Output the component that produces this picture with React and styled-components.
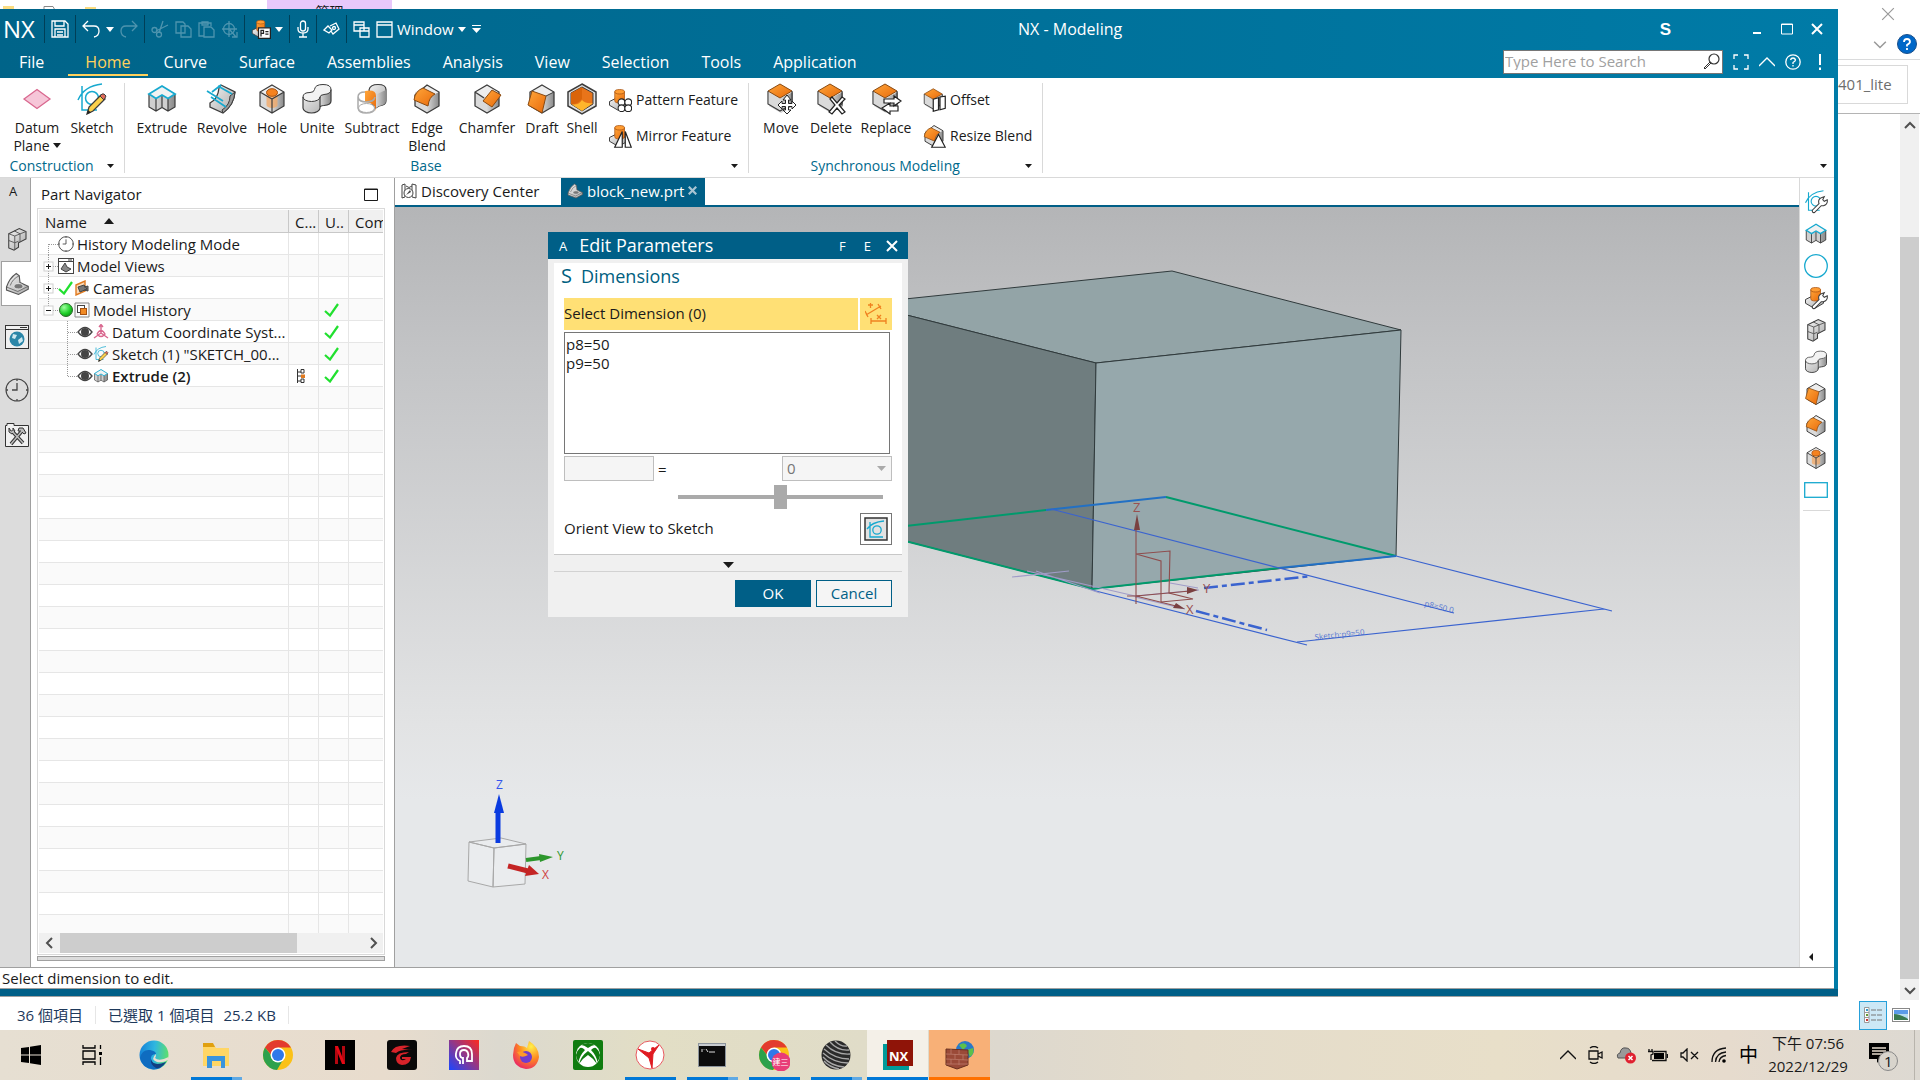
import React from "react";
import styled, { createGlobalStyle, css } from "styled-components";

const Global = createGlobalStyle`
  *, *::before, *::after { box-sizing: border-box; }
  html, body { margin: 0; height: 100%; overflow: hidden; }
  body {
    font-family: "Open Sans", "Noto Sans CJK TC", sans-serif;
    font-size: 15px;
    line-height: 18px;
    color: #1a1a1a;
    background: #fff;
  }
  button { font: inherit; color: inherit; background: none; border: 0; padding: 0; margin: 0; cursor: pointer; }
  input, select { font: inherit; margin: 0; }
  svg { display: block; flex: none; }
`;

/* ---------- desktop ---------- */

const Screen = styled.div`
  display: flex;
  flex-direction: column;
  height: 100vh;
  overflow: hidden;
`;

const Desktop = styled.main`
  position: relative;
  flex: 1;
  min-height: 0;
`;

const Explorer = styled.section`
  display: flex;
  flex-direction: column;
  height: 100%;
  background: #fff;
`;

const ExplorerTop = styled.header`
  display: flex;
  justify-content: space-between;
  height: 60px;
  border-bottom: 1px solid #dadbdc;
`;

const ExplorerQuick = styled.div`
  display: flex;
  gap: 28px;
  padding-left: 3px;
  align-items: flex-start;
`;

const ManageTab = styled.div`
  width: 125px;
  height: 30px;
  margin-left: 142px;
  padding-top: 3px;
  background: #e8c8fb;
  text-align: center;
  font-size: 14px;
`;

const ExplorerControls = styled.div`
  display: grid;
  grid-template-columns: 20px 22px;
  gap: 10px 6px;
  padding: 4px 2px 0 0;
  justify-items: center;
  align-items: center;
  align-content: start;
`;

const ExplorerClose = styled.button`
  grid-column: 1 / 3;
  justify-self: start;
  height: 20px;
  padding-left: 11px;
`;

const ExplorerAddress = styled.div`
  display: flex;
  justify-content: flex-end;
  height: 54px;
  padding: 5px 12px 0 0;
  border-bottom: 1px solid #b4b4b4;
`;

const AddressBox = styled.div`
  width: 72px;
  height: 39px;
  padding: 9px 0 0 1px;
  border: 1px solid #d9d9d9;
  color: #6d6d6d;
`;

const ExplorerBody = styled.div`
  flex: 1;
  display: flex;
  justify-content: flex-end;
  padding-right: 1px;
`;

const VScroll = styled.div`
  display: flex;
  flex-direction: column;
  width: 19px;
  background: #f0f0f0;
`;

const VScrollButton = styled.button`
  display: flex;
  height: 21px;
  align-items: center;
  justify-content: center;
`;

const VThumb = styled.div`
  flex: 1;
  margin-top: 102px;
  background: #cdcdcd;
`;

const ExplorerStatus = styled.footer`
  display: flex;
  align-items: center;
  height: 30px;
  padding-left: 17px;
  color: #1e395b;
`;

const StatusItem = styled.span`
  padding-right: ${(p) => p.$pad || 12}px;
  margin-right: ${(p) => p.$gap || 12}px;
  border-right: ${(p) => (p.$line ? "1px solid #e6e6e6" : "0")};
`;

const ViewButtons = styled.div`
  display: flex;
  gap: 5px;
  margin-left: auto;
  padding-right: 10px;
  align-items: center;
`;

const ViewButton = styled.button`
  display: flex;
  align-items: center;
  justify-content: center;
  width: ${(p) => (p.$on ? 28 : 18)}px;
  height: 29px;
  background: ${(p) => (p.$on ? "#cce8f6" : "none")};
  border: ${(p) => (p.$on ? "1px solid #26a0da" : "0")};
`;

/* ---------- NX window ---------- */

const NxWindow = styled.section`
  position: absolute;
  left: 0;
  top: 9px;
  right: 82px;
  bottom: 33px;
  display: flex;
  flex-direction: column;
  background: linear-gradient(90deg, #006489, #007ba7);
`;

const TitleBar = styled.header`
  display: flex;
  align-items: center;
  height: 40px;
  padding: 0 15px 0 3px;
  color: #fff;
`;

const QuickBar = styled.div`
  display: flex;
  align-items: center;
  gap: 6px;
`;

const Brand = styled.span`
  margin-right: 3px;
  font-size: 24px;
  line-height: 32px;
  color: #fff;
`;

const QuickSep = styled.span`
  width: 1px;
  height: 28px;
  background: #003f57;
`;

const QuickButton = styled.button`
  display: flex;
  align-items: center;
  gap: 4px;
  height: 26px;
  color: #fff;
  opacity: ${(p) => (p.disabled ? 0.3 : 1)};
`;

const AppTitle = styled.h1`
  flex: 1;
  margin: 0;
  font-size: 16px;
  font-weight: 400;
  text-align: center;
`;

const WindowControls = styled.div`
  display: flex;
  align-items: center;
  gap: 18px;
`;

const Badge = styled.span`
  margin-right: 62px;
  padding-top: 2px;
  font: 700 17px/20px "Liberation Sans", sans-serif;
`;

const MenuBar = styled.div`
  display: flex;
  align-items: stretch;
  height: 29px;
  padding-right: 9px;
  color: #fff;
`;

const MenuTabs = styled.nav`
  display: flex;
  align-items: stretch;
  padding-bottom: 2px;
`;

const MenuTab = styled.button`
  padding: 0 ${(p) => (p.$on ? 17 : 16)}px;
  ${(p) => p.$file && "padding: 0 24px 0 19px;"}
  font-size: 16px;
  line-height: 22px;
  color: ${(p) => (p.$on ? "#ffd15c" : "#fff")};
  border-bottom: 2px solid ${(p) => (p.$on ? "#ffd15c" : "transparent")};
`;

const MenuTools = styled.div`
  display: flex;
  align-items: center;
  gap: 10px;
  margin-left: auto;
  padding-bottom: 3px;
`;

const SearchBox = styled.label`
  display: flex;
  align-items: center;
  width: 220px;
  height: 24px;
  padding: 0 2px 2px 0;
  background: #fff;
  border: 1px solid #767676;
`;

const SearchInput = styled.input`
  flex: 1;
  min-width: 0;
  padding: 0 1px;
  border: 0;
  outline: 0;
  background: none;
  &::placeholder { color: #a0a0a0; opacity: 1; }
`;

const IconButton = styled.button`
  display: flex;
  align-items: center;
  justify-content: center;
  color: ${(p) => p.$color || "#fff"};
`;

const Client = styled.div`
  flex: 1;
  min-height: 0;
  display: flex;
  flex-direction: column;
  margin-right: 4px;
  background: #fff;
`;

/* ---------- ribbon ---------- */

const Ribbon = styled.div`
  display: flex;
  height: 100px;
  padding-top: 5px;
  border-bottom: 1px solid #d9d9d9;
  font-size: 14px;
`;

const Group = styled.section`
  display: flex;
  flex-direction: column;
  height: 90px;
  border-right: 1px solid #d9d9d9;
`;

const GroupBody = styled.div`
  display: flex;
  flex: 1;
  padding: 0 7px;
`;

const GroupFoot = styled.div`
  display: flex;
  align-items: center;
  height: 14px;
  color: #00698c;
`;

const FootLabel = styled.span`
  flex: 1;
  text-align: center;
`;

const FootArrow = styled.button`
  display: flex;
  width: 21px;
  padding-left: 4px;
`;

const BigButton = styled.button`
  display: flex;
  flex-direction: column;
  align-items: center;
  gap: 4px;
  width: ${(p) => p.$w}px;
  text-align: center;
  line-height: 18px;
`;

const SmallStack = styled.div`
  display: flex;
  flex-direction: column;
  gap: 12px;
  padding: 5px 3px 0 6px;
`;

const SmallButton = styled.button`
  display: flex;
  align-items: center;
  gap: 4px;
  height: 24px;
  white-space: nowrap;
`;

const RibbonEnd = styled.div`
  display: flex;
  flex: 1;
  align-items: flex-end;
  justify-content: flex-end;
  padding: 0 7px 9px 0;
`;

const InlineArrow = styled.i`
  display: inline-block;
  margin: 0 0 3px 3px;
  border: 4px solid transparent;
  border-bottom: 0;
  border-top: 5px solid #1a1a1a;
`;

/* ---------- work area ---------- */

const Work = styled.div`
  flex: 1;
  min-height: 0;
  display: flex;
`;

const ResourceBar = styled.nav`
  display: flex;
  flex-direction: column;
  width: 31px;
  background: #dcdcdc;
  border-right: 1px solid #a0a0a0;
`;

const ResourceLetter = styled.span`
  height: 38px;
  padding: 4px 0 0 9px;
  font-size: 13px;
`;

const ResourceButton = styled.button`
  display: flex;
  align-items: center;
  justify-content: center;
  height: 45px;
  padding-left: 3px;
  margin-top: ${(p) => p.$gap || 0}px;
  ${(p) =>
    p.$on &&
    css`
      margin-left: 1px;
      margin-right: -1px;
      padding-left: 0;
      background: #fff;
      border: 1px solid #a0a0a0;
      border-right: 0;
    `}
`;

const Navigator = styled.aside`
  display: flex;
  flex-direction: column;
  width: 364px;
  padding: 0 9px 6px 6px;
  border-right: 1px solid #a0a0a0;
`;

const NavTitle = styled.div`
  display: flex;
  align-items: center;
  justify-content: space-between;
  height: 30px;
  padding: 2px 7px 0 4px;
`;

const NavFrame = styled.div`
  flex: 1;
  min-height: 0;
  display: flex;
  flex-direction: column;
  padding: 1px;
  border: 1px solid #d9d9d9;
`;

const TreeClip = styled.div`
  flex: 1;
  min-height: 0;
  overflow: hidden;
`;

const Tree = styled.table`
  width: 100%;
  table-layout: fixed;
  border-collapse: separate;
  border-spacing: 0;
`;

const Th = styled.th`
  height: 23px;
  padding: 2px 0 0 6px;
  overflow: hidden;
  font-weight: 400;
  text-align: left;
  white-space: nowrap;
  background: #f0f0f0;
  border-right: 1px solid #c8c8c8;
  border-bottom: 1px solid #c8c8c8;
  &:last-child { border-right: 0; }
`;

const SortArrow = styled.span`
  display: inline-block;
  margin: 0 0 4px 17px;
  border: 5px solid transparent;
  border-top: 0;
  border-bottom: 6px solid #1a1a1a;
`;

const Tr = styled.tr`
  background: ${(p) => (p.$alt ? "#fafafa" : "#fff")};
  font-weight: ${(p) => (p.$bold ? 600 : 400)};
`;

const Td = styled.td`
  height: 22px;
  padding: 0;
  border-right: 1px solid #e6e6e6;
  border-bottom: 1px solid #e6e6e6;
  &:last-child { border-right: 0; }
`;

const TreeItem = styled.span`
  display: flex;
  align-items: center;
  height: 21px;
  white-space: nowrap;
`;

const TreeText = styled.span`
  margin-left: 3px;
`;

const CellMid = styled.span`
  display: flex;
  padding-left: 5px;
`;

const HScroll = styled.div`
  display: flex;
  align-items: stretch;
  height: 20px;
  background: #f0f0f0;
`;

const HThumb = styled.div`
  flex: 0 1 69%;
  background: #cdcdcd;
`;

const HScrollButton = styled.button`
  display: flex;
  width: 21px;
  align-items: center;
  justify-content: center;
  margin-left: ${(p) => (p.$end ? "auto" : 0)};
`;

const Splitter = styled.div`
  height: 5px;
  margin-top: 1px;
  background: #dcdcdc;
  border: 1px solid #a0a0a0;
`;

const Graphics = styled.section`
  flex: 1;
  min-width: 0;
  display: flex;
  flex-direction: column;
`;

const DocTabs = styled.div`
  display: flex;
  height: 29px;
  border-bottom: 2px solid #005f87;
`;

const DocTab = styled.button`
  display: flex;
  align-items: center;
  gap: 4px;
  width: ${(p) => (p.$on ? 144 : 166)}px;
  padding: 0 6px 2px;
  color: ${(p) => (p.$on ? "#fff" : "#1a1a1a")};
  background: ${(p) => (p.$on ? "#005f87" : "#fff")};
`;

const Viewport = styled.div`
  position: relative;
  flex: 1;
  min-height: 0;
  overflow: hidden;
  background: linear-gradient(#b4b5b7, #c3c4c6 20%, #e2e3e4 68%, #e6e8ea 78%);
`;

const SideBar = styled.nav`
  display: flex;
  flex-direction: column;
  align-items: center;
  gap: 8px;
  width: 35px;
  padding: 12px 2px 6px 0;
  border-left: 1px solid #d9d9d9;
`;

const SideLine = styled.hr`
  width: 27px;
  margin: 0;
  border: 0;
  border-top: 1px solid #d9d9d9;
`;

const SideEnd = styled.button`
  margin-top: auto;
  margin-right: 11px;
`;

const PromptLine = styled.div`
  height: 22px;
  padding: 1px 2px;
  border-top: 1px solid #a0a0a0;
  border-bottom: 1px solid #a0a0a0;
`;

const NxFoot = styled.div`
  height: 8px;
  background: #005f87;
  border-bottom: 1px solid #a0a0a0;
`;

/* ---------- dialog ---------- */

const Dialog = styled.section`
  position: absolute;
  left: 153px;
  top: 25px;
  width: 360px;
  background: #f0f0f0;
`;

const DialogTitle = styled.header`
  display: flex;
  align-items: center;
  height: 27px;
  padding: 0 10px 0 11px;
  background: #005f87;
  color: #fff;
`;

const DialogHeading = styled.h2`
  flex: 1;
  margin: 0;
  padding: 0 0 2px 12px;
  font-size: 18px;
  line-height: 24px;
  font-weight: 400;
`;

const Letter = styled.span`
  font-size: ${(p) => p.$size || 13}px;
  margin-right: ${(p) => p.$mr || 0}px;
`;

const DialogBody = styled.div`
  margin: 4px 6px 0;
  padding: 0 10px 9px;
  background: #fff;
  border-bottom: 1px solid #c8c8c8;
`;

const SectionTitle = styled.h3`
  display: flex;
  align-items: center;
  gap: 9px;
  height: 35px;
  margin: 0 -3px;
  padding-bottom: 9px;
  font-size: 18px;
  font-weight: 400;
  color: #00607f;
`;

const SelectRow = styled.div`
  display: flex;
  gap: 2px;
  height: 32px;
`;

const SelectLabel = styled.label`
  flex: 1;
  line-height: 30px;
  background: #ffe075;
`;

const SelectTool = styled.button`
  display: flex;
  align-items: center;
  justify-content: center;
  width: 32px;
  background: #ffe075;
`;

const ListBox = styled.select`
  display: block;
  width: 326px;
  height: 122px;
  margin-top: 2px;
  padding: 1px 0;
  color: #1a1a1a;
  background: #fff;
  border: 1px solid #767676;
  border-radius: 0;
  outline: 0;
  overflow: hidden;
  option { height: 19px; min-height: 19px; padding: 0 1px; line-height: 18px; }
`;

const ValueRow = styled.div`
  display: flex;
  align-items: center;
  gap: 4px;
  margin-top: 2px;
`;

const NameInput = styled.input`
  width: 90px;
  height: 25px;
  background: #f5f5f5;
  border: 1px solid #bebebe;
`;

const ComboWrap = styled.div`
  display: grid;
  align-items: center;
  width: 110px;
  margin-left: auto;
  background: #f5f5f5;
  border: 1px solid #bebebe;
  svg { grid-area: 1 / 1; justify-self: end; margin-right: 5px; pointer-events: none; }
`;

const Combo = styled.select`
  grid-area: 1 / 1;
  width: 100%;
  height: 23px;
  padding: 0 4px 2px;
  appearance: none;
  color: #767676;
  opacity: 1;
  background: none;
  border: 0;
`;

const Slider = styled.input`
  display: block;
  width: 205px;
  height: 24px;
  margin: 4px 9px 4px auto;
  appearance: none;
  background: linear-gradient(#aaa, #aaa) center / 100% 4px no-repeat;
  &::-webkit-slider-thumb {
    appearance: none;
    width: 13px;
    height: 24px;
    background: #aaa;
  }
`;

const OrientRow = styled.div`
  display: flex;
  align-items: center;
  justify-content: space-between;
`;

const OrientLabel = styled.label`
  padding-bottom: 2px;
`;

const OrientButton = styled.button`
  display: flex;
  align-items: center;
  justify-content: center;
  width: 32px;
  height: 32px;
  background: #fff;
  border: 1px solid #767676;
`;

const MoreButton = styled.button`
  display: flex;
  align-items: center;
  justify-content: center;
  width: 348px;
  height: 17px;
  margin: 0 6px;
  padding-top: 4px;
  border-bottom: 1px solid #d2d2d2;
`;

const DialogFoot = styled.footer`
  display: flex;
  justify-content: flex-end;
  gap: 5px;
  padding: 8px 16px 10px;
`;

const DialogButton = styled.button`
  width: 76px;
  height: 27px;
  padding-bottom: 2px;
  color: ${(p) => (p.$primary ? "#fff" : "#005f87")};
  background: ${(p) => (p.$primary ? "#005f87" : "#f5f5f5")};
  border: 1px solid #005f87;
`;

/* ---------- taskbar ---------- */

const Taskbar = styled.footer`
  display: flex;
  height: 50px;
  background: linear-gradient(90deg, #e6dfd2, #e8dccd 20%, #dcd9cf 26%, #e2dec5 34%, #e0dcc8 45%, #ddd8ce 52%, #e4dccb 62%, #e8dfc9 78%, #e6dbcd 90%, #ddd9d2);
`;

const Task = styled.button`
  position: relative;
  display: flex;
  align-items: center;
  justify-content: center;
  width: ${(p) => p.$w || 62}px;
  background: ${(p) => p.$bg || "none"};
  background-clip: padding-box;
  border-right: ${(p) => (p.$bg ? "1px solid transparent" : "0")};
`;

const Running = styled.span`
  position: absolute;
  left: ${(p) => (p.$full ? 0 : 6)}px;
  right: ${(p) => (p.$full ? 0 : 5)}px;
  bottom: 0;
  height: 3px;
  background: ${(p) =>
    p.$multi ? "linear-gradient(90deg, #0078d7 80%, #5fa9e4 80%)" : p.$color || "#0078d7"};
`;

const Tray = styled.div`
  display: flex;
  align-items: center;
  gap: 12px;
  margin-left: auto;
`;

const Clock = styled.div`
  width: 86px;
  margin-left: -5px;
  text-align: center;
  line-height: 23px;
  white-space: nowrap;
`;

const Ime = styled.span`
  font-size: 19px;
  line-height: 24px;
  color: #000;
`;

const Notify = styled.button`
  margin: 0 4px 0 3px;
`;

const ShowDesktop = styled.button`
  width: 6px;
  height: 50px;
  border-left: 1px solid #b8b4ac;
`;

/* ---------- icons ---------- */

const Svg = ({ s = 24, w, h, vb, children, ...r }) => (
  <svg width={w || s} height={h || s} viewBox={vb || `0 0 ${w || s} ${h || s}`} fill="none" aria-hidden="true" {...r}>
    {children}
  </svg>
);

const DefsSvg = styled.svg`
  position: absolute;
`;

const Defs = () => (
  <DefsSvg width="0" height="0" aria-hidden="true">
    <defs>
      <linearGradient id="gr" x1="0" y1="0" x2="1" y2="1">
        <stop offset="0" stopColor="#f4f4f4" />
        <stop offset="1" stopColor="#a8a8a8" />
      </linearGradient>
      <linearGradient id="gd" x1="0" y1="0" x2="1" y2="0">
        <stop offset="0" stopColor="#d8d8d8" />
        <stop offset="1" stopColor="#8a8a8a" />
      </linearGradient>
      <linearGradient id="og" x1="0" y1="0" x2="1" y2="1">
        <stop offset="0" stopColor="#ffa63a" />
        <stop offset="1" stopColor="#e8690a" />
      </linearGradient>
      <linearGradient id="edge" x1="0" y1=".4" x2="1" y2=".5">
        <stop offset="0" stopColor="#1583d8" />
        <stop offset=".5" stopColor="#2fb6e0" />
        <stop offset="1" stopColor="#5ee06a" />
      </linearGradient>
      <linearGradient id="head" x1="0" y1="1" x2="1" y2="0">
        <stop offset="0" stopColor="#1a45ff" />
        <stop offset="1" stopColor="#ff2a1c" />
      </linearGradient>
      <radialGradient id="ff" cx=".7" cy=".2" r=".9">
        <stop offset="0" stopColor="#fff04a" />
        <stop offset=".5" stopColor="#ff8a1f" />
        <stop offset="1" stopColor="#e81e6a" />
      </radialGradient>
      <radialGradient id="green" cx=".35" cy=".3" r=".8">
        <stop offset="0" stopColor="#9dff9d" />
        <stop offset=".6" stopColor="#1fd02a" />
        <stop offset="1" stopColor="#0a8a12" />
      </radialGradient>
    </defs>
  </DefsSvg>
);

const K = "#3c3c3c";

const Caret = ({ c = "#1a1a1a", w = 8, h = 5 }) => (
  <Svg w={w} h={h}>
    <path d={`M0 0H${w}L${w / 2} ${h}Z`} fill={c} />
  </Svg>
);

const Box = () => (
  <>
    <path d="M16 2 28 9V23L16 30 4 23V9Z" fill="#ededed" />
    <path d="M16 15 28 9V23L16 30Z" fill="url(#gd)" />
    <path d="M16 15 4 9V23L16 30Z" fill="#dadada" />
  </>
);

const shapes = {
  datum: <path d="M3 16 16 6.500 29 16 16 25.500Z" fill="#f6c6d8" stroke="#d9688f" strokeWidth="1.300" />,
  sketchBase: (
    <>
      <path d="M6 3V27H21M2 17Q8 3 26 1" stroke="#17a9cf" strokeWidth="1.500" />
      <circle cx="16" cy="15" r="6.500" stroke="#17a9cf" strokeWidth="1.500" />
    </>
  ),
  pencil: (
    <g>
      <path d="M11 31 13 24 25 12 29 16 17 28Z" fill="#fbd04a" stroke={K} strokeWidth="1.300" />
      <path d="M24 13 26 11Q28 10 30 13L28 17Z" fill="#e06a5a" stroke={K} />
      <path d="M11 31 12 27 15 29.500Z" fill="#222" />
    </g>
  ),
  wrench: (
    <path d="M11 27 20 18Q18 12 24 10L27 9 25 13 27 15 31 13Q32 19 26 21L23 21 14 30Q11 31 11 27Z" fill="#fff" stroke={K} strokeWidth="1.400" />
  ),
  extrude: (
    <>
      <path d="M3 11 16 3 29 11V24L22 28 16 24 10 28 3 24Z" fill="#e6e6e6" />
      <path d="M16 13 22 16V28L16 24.500ZM3 12 10 16V28L3 24Z" fill="#cfcfcf" />
      <path d="M22 16 29 11V24L22 28ZM10 16 16 13V24L10 28Z" fill="url(#gd)" />
      <path d="M3 11V24L10 28 16 24.500 22 28 29 24V11M10 16V28M22 16V28M16 13V24.500" stroke={K} strokeWidth="1.200" />
      <path d="M3 11 16 3 29 11 22 15.500 16 12 10 15.500Z" fill="#f2f2f2" stroke="#17a9cf" strokeWidth="1.800" />
    </>
  ),
  revolve: (
    <>
      <path d="M15 2 29 9Q28 22 17 30L4 24V20Q12 16 13 5Z" fill="url(#gr)" stroke={K} strokeWidth="1.300" />
      <path d="M24 13 29 9Q28 22 17 30L16 27Q24 22 24 13Z" fill="#9a9a9a" stroke={K} />
      <path d="M12 3 26 11M1 8 17 18M5 14 20 24M6 9 15 2" stroke="#17a9cf" strokeWidth="1.700" />
    </>
  ),
  hole: (
    <>
      <Box />
      <path d="M10.500 10V22A5.500 3 0 0 0 21.500 22V10Z" fill="#f3a763" opacity=".75" />
      <path d="M16 2 28 9V23L16 30 4 23V9ZM4 9 16 16 28 9M16 16V30" stroke={K} strokeWidth="1.200" />
      <ellipse cx="16" cy="9.500" rx="5.500" ry="3.800" fill="#f5821f" stroke="#a75210" />
    </>
  ),
  unite: (
    <>
      <path d="M2 14V25A8.500 5 0 0 0 19 25V24Q20 22.500 23 22.500 30 22 30 18V6.500Z" fill="url(#gr)" />
      <path d="M19 14V25L19 24Q20 22.500 23 22.500 30 22 30 18V6.500Q30 11 22 11.500 19 12 19 14Z" fill="url(#gd)" />
      <path d="M2 14Q2 9.500 9 9.500 13 9.500 13.500 6.500 14 1.500 22 1.500 30 1.500 30 6.500 30 11 23 11.500 19 12 19 14A8.500 4.500 0 0 1 2 14Z" fill="#f2f2f2" stroke={K} />
      <path d="M2 14V25A8.500 5 0 0 0 19 25V24Q20 22.500 23 22.500 30 22 30 18V6.500M19 14V25" stroke={K} strokeWidth="1.200" />
    </>
  ),
  subtract: (
    <>
      <path d="M13 7Q14 1.500 22 1.500 30 1.500 30 6.500V18Q30 22 23 23L18 26Z" fill="url(#gr)" stroke={K} strokeWidth="1.200" />
      <path d="M20 12Q21 11 30 7V18Q30 22 23 23L20 25Z" fill="url(#gd)" />
      <path d="M9 8Q20 6 20 13V28Q20 20 9 19Z" fill="url(#og)" />
      <path d="M2 14V25Q3 30 10 30 18 30 19 25M2 14Q2 9 9 9M2 14Q3 19 10 19 18 19 19 14" stroke="#aaa" strokeWidth="1.500" />
      <ellipse cx="10.500" cy="25" rx="8" ry="4.500" fill="#fff" stroke="#aaa" />
    </>
  ),
  edgeBlend: (
    <>
      <Box />
      <path d="M16 2 28 9V23L16 30 4 23V12Z" stroke={K} strokeWidth="1.300" />
      <path d="M12 5 24 11Q18 14 17 23L3 17Q4 8 12 5Z" fill="url(#og)" stroke="#8a4a10" />
    </>
  ),
  chamfer: (
    <>
      <Box />
      <path d="M16 2 28 9V23L16 30 4 23V9ZM4 9 13 15" stroke={K} strokeWidth="1.300" />
      <path d="M21 7 30 12 21 24 12 18Z" fill="url(#og)" stroke="#8a4a10" />
    </>
  ),
  draft: (
    <>
      <Box />
      <path d="M16 2 28 9V23L16 30 4 23V9Z" stroke={K} strokeWidth="1.300" />
      <path d="M6 8 20 13 16 30 2 22Z" fill="url(#og)" stroke="#8a4a10" />
      <path d="M20 13 28 9" stroke={K} />
    </>
  ),
  shell: (
    <>
      <path d="M16 1 30 9V23L16 31 2 23V9Z" fill="#e0e0e0" stroke={K} strokeWidth="1.500" />
      <path d="M16 4 27 10V21L16 28 5 21V10Z" fill="#e8741a" stroke={K} />
      <path d="M16 4V16Q11 22 5 21V10Z" fill="#d9640a" />
      <path d="M5 21Q12 23 16 17 20 21 27 20L16 28Z" fill="#ffb52c" />
    </>
  ),
  feature: (
    <>
      <path d="M2 18 12 13 26 19V23L14 30 2 23Z" fill="url(#gr)" stroke={K} strokeWidth="1.300" />
      <path d="M9 5V17A6.500 3 0 0 0 22 17V5Z" fill="url(#og)" stroke="#a75210" />
      <ellipse cx="15.500" cy="5" rx="6.500" ry="3" fill="#ff9d33" stroke="#a75210" />
    </>
  ),
  topBox: (
    <>
      <Box />
      <path d="M15 1 27 8 15 15 3 8Z" fill="url(#og)" stroke="#8a4a10" />
      <path d="M3 8V21L15 28 27 21V8" stroke={K} strokeWidth="1.200" />
    </>
  ),
  blocks: (
    <>
      <path d="M5 9 19 2 28 6V16L18 21V27L12 31 5 28Z" fill="url(#gr)" stroke={K} strokeWidth="1.400" />
      <path d="M5 9 13 12 28 6M13 12V30M5 18 13 21 18 19M12 5 20 9V20" stroke="#555" strokeWidth="1.200" />
    </>
  ),
  part: (
    <>
      <path d="M2 20Q6 8 15 2L19 5 20 14 31 19V23L18 30 2 24Z" fill="url(#gr)" stroke="#555" strokeWidth="1.500" />
      <path d="M2 20 17 26 31 19M7 18Q10 9 19 5" stroke="#555" />
      <ellipse cx="18" cy="19" rx="6" ry="3.500" fill="#777" stroke="#eee" />
    </>
  ),
};

const overlays = {
  move: <path d="M22 12 26 17H23.500V20.500H27V18L31 22 27 26V23.500H23.500V27H26L22 31 18 27H20.500V23.500H17V26L13 22 17 18V20.500H20.500V17H18Z" fill="#fff" stroke="#222" />,
  delete: <path d="M15 16 17 14 22 20 27 14 30 16 24 22 30 29 27 31 22 25 17 31 14 29 20 22Z" fill="#fff" stroke="#222" strokeWidth="1.200" />,
  replace: <path d="M14 16H24V13L31 18 24 23V20H14ZM28 23H20V20L12 25 20 31V28H28Z" fill="#fff" stroke="#222" strokeWidth="1.200" />,
  pattern: (
    <g fill="#fff" stroke="#222" strokeWidth="1.400">
      <circle cx="18" cy="19" r="4.500" />
      <circle cx="27" cy="19" r="4.500" />
      <circle cx="18" cy="27" r="4.500" />
      <circle cx="27" cy="27" r="4.500" />
    </g>
  ),
  mirror: <path d="M19 10 19 31H9ZM23 10V31H31Z" fill="#fff" stroke="#222" strokeWidth="1.600" />,
  offset: <path d="M15 15 22 13V29L15 31ZM24 12 31 11V27L24 29Z" fill="#fff" stroke="#222" strokeWidth="1.600" />,
  resize: <path d="M22 14 31 31H13Z" fill="#fff" stroke="#222" strokeWidth="1.600" />,
};

const Tool = ({ names, s = 32 }) => (
  <Svg s={s} vb="0 0 32 32">
    {names.split(" ").map((n) => (
      <React.Fragment key={n}>{shapes[n] || overlays[n]}</React.Fragment>
    ))}
  </Svg>
);

const Check = () => (
  <Svg w={16} h={14}>
    <path d="M1 8 6 12.500 14 1" stroke="#21e02f" strokeWidth="2.200" />
  </Svg>
);

const Eye = () => (
  <Svg w={16} h={12}>
    <path d="M1 6Q8-3 15 6 8 15 1 6Z" fill="#fff" stroke="#444" strokeWidth="1.300" />
    <circle cx="8" cy="6" r="4" fill="#444" />
  </Svg>
);

const ClockIcon = ({ s = 16 }) => (
  <Svg s={s} vb="0 0 24 24">
    <circle cx="12" cy="12" r="11" stroke="#444" strokeWidth={s > 16 ? 1.1 : 1.4} />
    <path d="M12 5V12H7M12 1V3M12 21V23M1 12H3M21 12H23" stroke="#444" strokeWidth="1.300" />
  </Svg>
);

const CrossIcon = ({ s = 12, c = "#fff", w = 2 }) => (
  <Svg s={s} vb="0 0 12 12">
    <path d="M1 1 11 11M11 1 1 11" stroke={c} strokeWidth={w} />
  </Svg>
);

const Chevron = ({ d, c = "#505050", w = 2, s = 12 }) => {
  const paths = { up: "M1 9 6 4 11 9", down: "M1 4 6 9 11 4", left: "M8 1 3 6 8 11", right: "M4 1 9 6 4 11" };
  return (
    <Svg s={s} vb="0 0 12 12">
      <path d={paths[d]} stroke={c} strokeWidth={w} />
    </Svg>
  );
};

/* Tree connector: dotted guides plus an optional expander box. */
const Branch = ({ kind, first, last }) => (
  <Svg w={19} h={22}>
    <path d={`M9.500 ${first ? 11 : 0}V${last ? 11 : 22}M10 11.500H19`} stroke="#999" strokeDasharray="1 1" />
    {kind && (
      <>
        <rect x="5" y="7" width="9" height="9" fill="#fff" stroke="#d0d0d0" />
        <path d={kind === "plus" ? "M7 11.500H12M9.500 9V14" : "M7 11.500H12"} stroke="#1a1a1a" />
      </>
    )}
  </Svg>
);

const SubBranch = ({ last }) => (
  <Svg w={38} h={22}>
    <path d={`M28.500 0V${last ? 11 : 22}M29 11.500H38`} stroke="#999" strokeDasharray="1 1" />
  </Svg>
);

const treeIcons = {
  views: (
    <Svg s={16}>
      <rect x=".5" y=".5" width="15" height="15" fill="#fff" stroke="#444" />
      <path d="M0 3.500H16M10 2H14" stroke="#444" />
      <path d="M3 11 7 5 9 9 13 11 8 14Z" fill="#888" stroke="#444" />
    </Svg>
  ),
  camera: (
    <Svg s={16}>
      <path d="M2 5 11 1V11L2 15Z" stroke="#e07a20" strokeWidth="1.400" fill="#fbd9b8" />
      <path d="M4 7 10 5 13 9 6 12ZM10 7 14 6V11L10 10" fill="#777" stroke="#444" />
    </Svg>
  ),
  history: (
    <Svg s={16}>
      <path d="M1 1H15V15H1Z" stroke="#888" />
      <rect x="3.500" y="3.500" width="7" height="7" fill="#fff" stroke="#444" />
      <rect x="6.500" y="6.500" width="6" height="6" fill="#f08a24" stroke="#a75210" />
    </Svg>
  ),
  csys: (
    <Svg s={16}>
      <path d="M8 1V9L1 14M8 9 15 14M6 3 8 .5 10 3M4 10Q8 3 12 10Q8 15 4 10" stroke="#d9688f" strokeWidth="1.400" />
    </Svg>
  ),
};

/* ---------- model scene ---------- */

const Scene = () => (
  <svg width="100%" height="100%" viewBox="395 207 1404 760" preserveAspectRatio="xMinYMin slice" role="img" aria-label="Model view">
    <g stroke="#303a3c" strokeWidth="1" strokeLinejoin="round">
      <path d="M800 310 1172 271 1401 330 1096 363 800 288Z" fill="#93a4a7" />
      <path d="M800 288 1096 363 1092 589 800 514Z" fill="#6f7d7f" />
      <path d="M1096 363 1401 330 1396 556 1092 589Z" fill="#96a8ac" />
    </g>
    <g fill="none" stroke="#009a6c" strokeWidth="2">
      <path d="M800 538 1046 510M1166 497 1396 556M800 514 1092 589 1279 568" />
      <path d="M1046 510 1166 497M1279 568 1396 556" stroke="#2270c4" />
    </g>
    <g fill="none" stroke="#3a63cf" strokeWidth="1.200">
      <path d="M1051 509 1454 613M1396 556 1612 611M1092 590 1307 645M1297 642 1604 609" />
      <path d="M1204 588 1311 576" strokeWidth="2.500" strokeDasharray="14 4 5 4" />
      <path d="M1196 611 1267 630" strokeWidth="2.500" strokeDasharray="14 4 5 4" />
    </g>
    <g fill="none" stroke="#a09cc8" strokeWidth="1.200">
      <path d="M1012 577 1069 571M1027 571 1135 596 1199 590M1036 571 1100 593M1170 583 1198 588M1135 597 1185 609" />
    </g>
    <g fill="#3a63cf" fontFamily="Open Sans, sans-serif" fontSize="8" opacity=".8">
      <text x="1315" y="640" transform="rotate(-6 1315 640)">Sketch:p9=50</text>
      <text x="1424" y="606" transform="rotate(14 1424 606)">p8=50.0</text>
    </g>
    <g fill="none" stroke="#8e4c4c" strokeWidth="1.100">
      <path d="M1136 604V528M1127 596H1140M1136 554 1170 551 1169 593 1193 599 1161 602V561Z" />
      <path d="M1136 596 1176 606M1136 596 1190 591" />
    </g>
    <g fill="#7a4040">
      <path d="M1137 514 1140 530H1134ZM1198 590 1187 594V587ZM1185 609 1173 608 1176 603Z" />
    </g>
    <g fill="#9a5050" fontFamily="Open Sans, sans-serif" fontSize="13">
      <text x="1133" y="512">Z</text>
      <text x="1203" y="593">Y</text>
      <text x="1186" y="614">X</text>
    </g>
    <g fill="#eaecee" stroke="#a8a8a8">
      <path d="M469 842 501 838 526 844 494 848ZM469 842 468 881 493 887 494 848ZM494 848 493 887 525 884 526 844Z" />
    </g>
    <path d="M498 843V811" stroke="#0a3be0" strokeWidth="5" />
    <path d="M499 794 504 813H494Z" fill="#0a3be0" />
    <path d="M526 860 541 858" stroke="#2c962c" strokeWidth="4" />
    <path d="M553 857 540 862 539 854Z" fill="#2c962c" />
    <path d="M508 866 528 871" stroke="#c42424" strokeWidth="5" />
    <path d="M539 874 525 876 529 865Z" fill="#c42424" />
    <g fontFamily="Open Sans, sans-serif" fontSize="12">
      <text x="496" y="789" fill="#3355ee">Z</text>
      <text x="557" y="860" fill="#2c962c">Y</text>
      <text x="542" y="879" fill="#d04040">X</text>
    </g>
  </svg>
);

/* ---------- task icons ---------- */

const Chrome = ({ badge }) => (
  <Svg s={32} vb="0 0 32 32">
    <circle cx="16" cy="16" r="15" fill="#fbc116" />
    <path d="M3 8.500A15 15 0 0 1 29 8.500H16L11 18Z" fill="#e33b2e" />
    <path d="M3 8.500A15 15 0 0 0 15 31L22 19 11 18.500Z" fill="#2da14c" />
    <circle cx="16" cy="16" r="7.500" fill="#fff" />
    <circle cx="16" cy="16" r="6" fill="#2f78ea" />
    {badge && (
      <>
        <circle cx="23" cy="23" r="9.500" fill="#e83d78" />
        <text x="14.500" y="26" fontSize="8" fill="#fff">建三</text>
      </>
    )}
  </Svg>
);

const taskIcons = {
  edge: (
    <Svg s={30}>
      <circle cx="15" cy="15" r="14.500" fill="url(#edge)" />
      <path d="M1 18Q3 9 11 10 17 11 17 14 11 14 12 20 15 28 27 22 22 30 14 29.500 3 28 1 18Z" fill="#0f6cc0" />
      <path d="M12 19Q14 27 27 22 22 29 17 28 11 25 12 19Z" fill="#123f80" />
      <path d="M17 14Q17 17 16 18 20 22 29.500 17L29 20Q24 23 18 22 11 19 17 14Z" fill="#e8dfd2" />
    </Svg>
  ),
  files: (
    <Svg s={30}>
      <path d="M2 5H13L15 8H28V26H2Z" fill="#ffd665" />
      <path d="M2 3H12L14 7H2Z" fill="#e0a010" />
      <path d="M6 28V16H24V28H20V21H11V28Z" fill="#3a94dd" />
    </Svg>
  ),
  netflix: (
    <Svg s={30}>
      <rect width="30" height="30" fill="#000" />
      <path d="M10 6H13V24H10ZM17 6H20V24H17Z" fill="#b20710" />
      <path d="M10 6H13L20 24H17Z" fill="#e50914" />
    </Svg>
  ),
  garena: (
    <Svg s={30}>
      <rect width="30" height="30" rx="3" fill="#0a0a0a" />
      <path d="M4 12Q8 4 23 6L15 9 26 10Q14 9 9 13ZM9 18Q10 12 22 12L19 14Q13 14 13 18 14 22 19 19H15V17H24Q23 25 15 25 9 24 9 18Z" fill="#d8232a" />
    </Svg>
  ),
  head: (
    <Svg s={30}>
      <rect width="30" height="30" fill="url(#head)" />
      <path d="M11 24V21Q6 19 7 13 8 6 15 6 23 6 23 14V21H18V18Q20 16 19 13 18 10 15 10 11 10 11 14 11 18 14 18V24" stroke="#fff" strokeWidth="1.800" />
    </Svg>
  ),
  firefox: (
    <Svg s={30}>
      <path d="M3 8 5 3 9 6Q14 6 16 8L18 1Q28 7 28 17 26 29 15 29 2 27 2 15Z" fill="url(#ff)" />
      <circle cx="15" cy="17" r="6" fill="#6f3ccf" />
      <path d="M6 12Q11 10 17 15 12 18 9 16Z" fill="#ff9a2a" />
    </Svg>
  ),
  xbox: (
    <Svg s={30}>
      <rect width="30" height="30" rx="2" fill="#107c10" />
      <circle cx="15" cy="15" r="12" fill="#fff" />
      <path d="M8 5Q11 5 15 8 19 5 22 5 15 1 8 5ZM6 24Q8 16 15 11 22 16 24 24 20 18 15 15 10 18 6 24ZM7 8Q9 7 12 10 7 15 5.500 22 0 14 7 8ZM23 8Q21 7 18 10 23 15 24.500 22 30 14 23 8Z" fill="#107c10" />
    </Svg>
  ),
  ballet: (
    <Svg s={30}>
      <circle cx="15" cy="15" r="14" fill="#fff" stroke="#e85a60" />
      <circle cx="18" cy="9" r="2" fill="#e01b22" />
      <path d="M3 9 14 13 24 5 18 14 17 28 14 18Z" fill="#e01b22" stroke="#e01b22" />
    </Svg>
  ),
  cmd: (
    <Svg w={28} h={24}>
      <rect x=".5" y=".5" width="27" height="23" fill="#0c0c0c" stroke="#8c949c" />
      <path d="M1 2H27" stroke="#c8ccd0" strokeWidth="2" />
      <path d="M4 6V9M6 6V6.500M8 6 10 9M11 9H17" stroke="#ddd" />
    </Svg>
  ),
  chrome: <Chrome />,
  chrome2: <Chrome badge />,
  ball: (
    <Svg s={30}>
      <circle cx="15" cy="15" r="14.500" fill="#2b2b2b" />
      <path d="M3 9Q14 19 28 19M2 13Q13 23 27 23M5 5Q15 15 29 14M9 2Q17 11 28 10M2 17Q10 26 23 27M14 1Q20 7 26 6M3 21Q8 27 18 29" stroke="#a8a8a8" strokeWidth="1.300" />
    </Svg>
  ),
  nx: (
    <Svg s={30}>
      <rect y="4" width="26" height="26" fill="#009a9a" />
      <rect x="4" width="26" height="26" fill="#8f1408" />
      <text x="6" y="21" fontFamily="Open Sans, sans-serif" fontWeight="700" fontSize="13" fill="#fff">NX</text>
    </Svg>
  ),
  firewall: (
    <Svg s={30}>
      <circle cx="20" cy="10" r="9" fill="#2a78c8" />
      <path d="M14 5Q20 1 22 6L18 10ZM22 10 28 8Q30 13 25 17Z" fill="#5cc04a" />
      <path d="M1 9 23 10V25L12 29 1 25Z" fill="#9a4a38" stroke="#6a3020" />
      <path d="M1 14 23 15M1 19 23 20M1 24 23 24M6 9V14M14 10V14M10 14V19M18 15V20M6 19V24M14 20V25" stroke="#c08070" strokeWidth=".7" />
    </Svg>
  ),
};

/* ---------- data ---------- */

const menus = ["File", "Home", "Curve", "Surface", "Assemblies", "Analysis", "View", "Selection", "Tools", "Application"];

const baseTools = [
  ["Extrude", "extrude", 60],
  ["Revolve", "revolve", 60],
  ["Hole", "hole", 40],
  ["Unite", "unite", 50],
  ["Subtract", "subtract", 60],
  ["Edge Blend", "edgeBlend", 50],
  ["Chamfer", "chamfer", 70],
  ["Draft", "draft", 40],
  ["Shell", "shell", 40],
];

const syncTools = [
  ["Move", "topBox move", 50],
  ["Delete", "topBox delete", 50],
  ["Replace", "topBox replace", 60],
];

const rows = [
  { lead: <Branch first />, icons: <ClockIcon s={16} />, text: "History Modeling Mode" },
  { lead: <Branch kind="plus" />, icons: treeIcons.views, text: "Model Views" },
  { lead: <Branch kind="plus" />, icons: <><Check />{treeIcons.camera}</>, text: "Cameras" },
  {
    lead: <Branch kind="minus" last />,
    icons: (
      <>
        <Svg s={16}><circle cx="8" cy="8" r="6.500" fill="url(#green)" stroke="#2a6a2a" /></Svg>
        {treeIcons.history}
      </>
    ),
    text: "Model History",
    ok: true,
  },
  { lead: <SubBranch />, icons: <><Eye />{treeIcons.csys}</>, text: "Datum Coordinate Syst...", ok: true },
  { lead: <SubBranch />, icons: <><Eye /><Tool s={16} names="sketchBase pencil" /></>, text: "Sketch (1) \"SKETCH_00...", ok: true },
  { lead: <SubBranch last />, icons: <><Eye /><Tool s={16} names="extrude" /></>, text: "Extrude (2)", ok: true, bold: true, mark: true },
];

const filler = Array.from({ length: 40 }, () => ({}));

const side = [
  ["Edit Sketch", "sketchBase wrench"],
  ["Extrude", "extrude"],
  ["Circle", null],
  ["Edit Feature", "feature wrench"],
  ["Assemblies", "blocks"],
  ["Unite", "unite"],
  ["Draft", "draft"],
  ["Edge Blend", "edgeBlend"],
  ["Hole", "hole"],
];

const tasks = [
  ["Edge", "edge"],
  ["Files", "files", { multi: true }],
  ["Chrome", "chrome"],
  ["Netflix", "netflix"],
  ["Garena", "garena"],
  ["Assistant", "head"],
  ["Firefox", "firefox"],
  ["Xbox", "xbox"],
  ["Ballet", "ballet", { run: true }],
  ["Terminal", "cmd", { multi: true }],
  ["Chrome profile", "chrome2", { run: true }],
  ["Ball", "ball", { multi: true }],
  ["NX", "nx", { full: true, bg: "#f4f0e8" }],
  ["Firewall", "firewall", { full: true, bg: "#f8b077", color: "#ff7000" }],
];

/* ---------- parts ---------- */

const L = { stroke: "currentColor", strokeWidth: 1.3 };

const Title = () => (
  <TitleBar>
    <QuickBar>
      <Brand>NX</Brand>
      <QuickSep />
      <QuickButton aria-label="Save">
        <Svg s={18}><path d="M1 1H14L17 4V17H1ZM4 1V6H13V1M4 17V9H14V17M6 12H12M6 15H12" {...L} /></Svg>
      </QuickButton>
      <QuickSep />
      <QuickButton aria-label="Undo">
        <Svg w={20} h={18}><path d="M6 1 1 6 6 11M1 6H12Q17 6 17 11 17 16 12 17" {...L} /></Svg>
        <Caret c="#fff" />
      </QuickButton>
      <QuickButton aria-label="Redo" disabled>
        <Svg w={18} h={18}><path d="M12 1 17 6 12 11M17 6H6Q1 6 1 11 1 16 6 17" {...L} /></Svg>
      </QuickButton>
      <QuickSep />
      <QuickButton aria-label="Cut" disabled>
        <Svg s={18}><path d="M17 5 5 11M12 1 8 13" {...L} /><circle cx="3.500" cy="10" r="2.500" {...L} /><circle cx="8" cy="14.500" r="2.500" {...L} /></Svg>
      </QuickButton>
      <QuickButton aria-label="Copy" disabled>
        <Svg s={17}><path d="M1 1H8L10 3V12H1ZM6 5H13L16 8V16H6Z" {...L} /></Svg>
      </QuickButton>
      <QuickButton aria-label="Paste" disabled>
        <Svg s={17}><path d="M6 15H1V2H13V5M4 1H10V4H4ZM6 6H13L16 9V16H6Z" {...L} /></Svg>
      </QuickButton>
      <QuickButton aria-label="Repeat" disabled>
        <Svg s={17}><path d="M8 0V16M1 8H16M9 9 15 16M11 16H16V11" {...L} /><circle cx="8" cy="8" r="5.500" {...L} /></Svg>
      </QuickButton>
      <QuickSep />
      <QuickButton aria-label="Edit parameters">
        <Svg w={20} h={20} vb="0 0 32 32">
          {shapes.feature}
          <path d="M12 14H31V31H12Z" fill="#fff" stroke="#222" strokeWidth="2" />
          <path d="M16 28V18H20V23H16M23 20H28M23 24H28" stroke="#222" strokeWidth="2" />
        </Svg>
        <Caret c="#fff" />
      </QuickButton>
      <QuickSep />
      <QuickButton aria-label="Voice">
        <Svg w={14} h={18}><rect x="4.500" y="1" width="5" height="10" rx="2.500" {...L} /><path d="M2 7V9Q2 13 7 13T12 9V7M7 13V17M3 17H11" {...L} /></Svg>
      </QuickButton>
      <QuickSep />
      <QuickButton aria-label="Touch">
        <Svg w={17} h={14}><path d="M1 8 5 4 9 8 6 11ZM7 4 13 1 16 7 10 12 8 9" {...L} /><circle cx="11" cy="6" r="1.500" {...L} /></Svg>
      </QuickButton>
      <QuickSep />
      <QuickButton aria-label="Switch window">
        <Svg s={17}><path d="M1 1H11V10H1ZM1 4H11M7 7H16V16H7ZM7 10H16" {...L} /></Svg>
      </QuickButton>
      <QuickButton>
        <Svg s={17}><path d="M1 1H16V16H1ZM1 4H16" {...L} /></Svg>
        Window
        <Caret c="#fff" />
      </QuickButton>
      <QuickButton aria-label="Customize">
        <Svg w={9} h={8}><path d="M0 .5H9" stroke="#fff" /><path d="M0 3H9L4.500 8Z" fill="#fff" /></Svg>
      </QuickButton>
    </QuickBar>
    <AppTitle>NX - Modeling</AppTitle>
    <WindowControls>
      <Badge>S</Badge>
      <IconButton aria-label="Minimize"><Svg s={12}><path d="M2 10H10" stroke="#fff" strokeWidth="2" /></Svg></IconButton>
      <IconButton aria-label="Maximize"><Svg s={12}><path d="M.5 1H11.500V11H.500ZM0 1.500H12" stroke="#fff" /></Svg></IconButton>
      <IconButton aria-label="Close"><CrossIcon /></IconButton>
    </WindowControls>
  </TitleBar>
);

const Menus = () => (
  <MenuBar>
    <MenuTabs>
      {menus.map((m) => (
        <MenuTab key={m} $on={m === "Home"} $file={m === "File"}>{m}</MenuTab>
      ))}
    </MenuTabs>
    <MenuTools>
      <SearchBox htmlFor="cmd-search">
        <SearchInput id="cmd-search" placeholder="Type Here to Search" />
        <Svg s={17}><circle cx="11" cy="6" r="5" stroke="#333" strokeWidth="1.200" /><path d="M7 9 1 15 2 16 8 10" stroke="#333" /></Svg>
      </SearchBox>
      <IconButton aria-label="Full screen"><Svg s={16}><path d="M1 5V1H5M11 1H15V5M15 11V15H11M5 15H1V11" {...L} /></Svg></IconButton>
      <IconButton aria-label="Collapse ribbon"><Svg w={16} h={10}><path d="M0 9 8 1 16 9" {...L} /></Svg></IconButton>
      <IconButton aria-label="Help">
        <Svg s={16}><circle cx="8" cy="8" r="7.200" {...L} /><path d="M5.500 6Q6 4 8 4T10.500 6Q10.500 7 8 8.500V10M8 11V12.500" {...L} /></Svg>
      </IconButton>
      <IconButton aria-label="Alerts"><Svg w={18} h={16}><path d="M9 0V11M9 13.500V16" stroke="#fff" strokeWidth="2" /></Svg></IconButton>
    </MenuTools>
  </MenuBar>
);

const Foot = ({ label }) => (
  <GroupFoot>
    <FootLabel>{label}</FootLabel>
    <FootArrow aria-label={`${label} options`}><Caret w={7} h={4} /></FootArrow>
  </GroupFoot>
);

const RibbonBar = () => (
  <Ribbon>
    <Group>
      <GroupBody>
        <BigButton $w={60}><Tool names="datum" /><span>Datum<br />Plane<InlineArrow /></span></BigButton>
        <BigButton $w={50}><Tool names="sketchBase pencil" />Sketch</BigButton>
      </GroupBody>
      <Foot label="Construction" />
    </Group>
    <Group>
      <GroupBody>
        {baseTools.map(([t, n, w]) => (
          <BigButton key={t} $w={w}><Tool names={n} />{t}</BigButton>
        ))}
        <SmallStack>
          <SmallButton><Tool s={24} names="feature pattern" />Pattern Feature</SmallButton>
          <SmallButton><Tool s={24} names="feature mirror" />Mirror Feature</SmallButton>
        </SmallStack>
      </GroupBody>
      <Foot label="Base" />
    </Group>
    <Group>
      <GroupBody>
        {syncTools.map(([t, n, w]) => (
          <BigButton key={t} $w={w}><Tool names={n} />{t}</BigButton>
        ))}
        <SmallStack>
          <SmallButton><Tool s={24} names="topBox offset" />Offset</SmallButton>
          <SmallButton><Tool s={24} names="edgeBlend resize" />Resize Blend</SmallButton>
        </SmallStack>
      </GroupBody>
      <Foot label="Synchronous Modeling" />
    </Group>
    <RibbonEnd><IconButton aria-label="Ribbon options"><Caret w={7} h={4} /></IconButton></RibbonEnd>
  </Ribbon>
);

const NavigatorPane = () => (
  <Navigator>
    <NavTitle>
      Part Navigator
      <IconButton aria-label="Maximize pane"><Svg w={14} h={13}><path d="M.5 1H13.500V12.500H.500Z M0 1.500H14" stroke="#1a1a1a" /></Svg></IconButton>
    </NavTitle>
    <NavFrame>
      <TreeClip>
        <Tree>
          <colgroup>
            <col />
            <col width="30" />
            <col width="30" />
            <col width="34" />
          </colgroup>
          <thead>
            <tr>
              <Th>Name<SortArrow /></Th>
              <Th>C...</Th>
              <Th>U..</Th>
              <Th>Com</Th>
            </tr>
          </thead>
          <tbody>
            {[...rows, ...filler].map((r, i) => (
              <Tr key={i} $alt={i % 2 === 1} $bold={r.bold}>
                <Td>
                  {r.text && (
                    <TreeItem>{r.lead}{r.icons}<TreeText>{r.text}</TreeText></TreeItem>
                  )}
                </Td>
                <Td>
                  {r.mark && (
                    <CellMid>
                      <Svg w={14} h={14}><path d="M3.500 0V14M4 3H7M4 7H7M4 12H7" stroke="#333" /><path d="M7 .5H10V4H7ZM7 10H10V13.500H7Z" stroke="#333" /><rect x="7" y="5.500" width="4" height="3.500" fill="#e07a20" /></Svg>
                    </CellMid>
                  )}
                </Td>
                <Td>{r.ok && <CellMid><Check /></CellMid>}</Td>
                <Td />
              </Tr>
            ))}
          </tbody>
        </Tree>
      </TreeClip>
      <HScroll>
        <HScrollButton aria-label="Scroll left"><Chevron d="left" /></HScrollButton>
        <HThumb />
        <HScrollButton $end aria-label="Scroll right"><Chevron d="right" /></HScrollButton>
      </HScroll>
    </NavFrame>
    <Splitter />
  </Navigator>
);

const EditDialog = () => (
  <Dialog role="dialog" aria-labelledby="dlg-title">
    <DialogTitle>
      <Letter>A</Letter>
      <DialogHeading id="dlg-title">Edit Parameters</DialogHeading>
      <Letter $mr={18}>F</Letter>
      <Letter $mr={15}>E</Letter>
      <IconButton aria-label="Close dialog"><CrossIcon /></IconButton>
    </DialogTitle>
    <DialogBody>
      <SectionTitle><Letter $size={20}>S</Letter>Dimensions</SectionTitle>
      <SelectRow>
        <SelectLabel htmlFor="dims">Select Dimension (0)</SelectLabel>
        <SelectTool aria-label="Pick dimension">
          <Svg s={22}><path d="M1 12 16 3M0 8 3 14M13 1 16 6M3 2H8M5.500 0V5M6 18H21M6 15V21M21 15V21M12 12 16 16M16 12 12 16" stroke="#f08220" strokeWidth="1.300" /></Svg>
        </SelectTool>
      </SelectRow>
      <ListBox id="dims" size={6}>
        <option>p8=50</option>
        <option>p9=50</option>
      </ListBox>
      <ValueRow>
        <NameInput aria-label="Dimension name" disabled />
        <span>=</span>
        <ComboWrap>
          <Combo aria-label="Dimension value" disabled><option>0</option></Combo>
          <Caret c="#aaa" w={9} h={5} />
        </ComboWrap>
      </ValueRow>
      <Slider type="range" aria-label="Value slider" min="0" max="100" defaultValue="50" disabled />
      <OrientRow>
        <OrientLabel htmlFor="orient">Orient View to Sketch</OrientLabel>
        <OrientButton id="orient">
          <Svg s={24}><rect x="1" y="1" width="22" height="22" fill="#e2e2e2" stroke="#333" strokeWidth="1.500" /><path d="M6 5V20H19M3 12Q8 5 20 4" stroke="#17a9cf" strokeWidth="1.300" /><circle cx="13" cy="13" r="4.200" stroke="#17a9cf" strokeWidth="1.300" /></Svg>
        </OrientButton>
      </OrientRow>
    </DialogBody>
    <MoreButton aria-label="More"><Caret w={11} h={6} /></MoreButton>
    <DialogFoot>
      <DialogButton $primary>OK</DialogButton>
      <DialogButton>Cancel</DialogButton>
    </DialogFoot>
  </Dialog>
);

const Nx = () => (
  <NxWindow>
    <Title />
    <Menus />
    <Client>
      <RibbonBar />
      <Work>
        <ResourceBar>
          <ResourceLetter>A</ResourceLetter>
          <ResourceButton aria-label="Assembly Navigator"><Tool s={24} names="blocks" /></ResourceButton>
          <ResourceButton $on aria-label="Part Navigator"><Tool s={24} names="part" /></ResourceButton>
          <ResourceButton $gap={8} aria-label="Web Browser">
            <Svg s={24}><rect x=".5" y=".5" width="23" height="23" fill="#f0f0f0" stroke="#333" /><path d="M0 4.500H24M15 2.500H22" stroke="#333" /><circle cx="12" cy="14" r="7.500" fill="#2b86a8" /><path d="M8 9 12 10 10 14 7 13ZM13 15 17 12 18 16 14 19Z" fill="#cfe8f0" /></Svg>
          </ResourceButton>
          <ResourceButton $gap={8} aria-label="History"><ClockIcon s={24} /></ResourceButton>
          <ResourceButton aria-label="Roles">
            <Svg s={24}><path d="M.5 2.500V23.500H23.500V2.500H9V.5H2V2.500Z" fill="#f0f0f0" stroke="#333" /><path d="M6 21 17 8M7 8 18 20" stroke="#333" strokeWidth="3.500" /><path d="M14 5 18 5 21 10 19 11 16 8 13 8ZM4 5V9L7 11 10 8 8 5V8L6 8Z" fill="#bbb" stroke="#333" /><path d="M6 21 17 8M7 8 18 20" stroke="#bbb" strokeWidth="1.500" /></Svg>
          </ResourceButton>
        </ResourceBar>
        <NavigatorPane />
        <Graphics>
          <DocTabs>
            <DocTab>
              <Svg s={16}><path d="M1 2 4 1V14L1 15ZM11 1 15 2V15L11 14ZM5 3Q8 6 11 3" stroke="#444" /><circle cx="7.500" cy="10" r="4.500" fill="#fff" stroke="#444" /><path d="M5 12 9 7 10 9Z" fill="#444" /></Svg>
              Discovery Center
            </DocTab>
            <DocTab $on>
              <Tool s={16} names="part" />block_new.prt
              <CrossIcon s={9} c="#a8c4d2" w={3} />
            </DocTab>
          </DocTabs>
          <Viewport>
            <Scene />
            <EditDialog />
          </Viewport>
        </Graphics>
        <SideBar>
          {side.map(([t, n]) => (
            <IconButton key={t} aria-label={t}>
              {n ? <Tool s={24} names={n} /> : <Svg s={24}><circle cx="12" cy="12" r="11.300" stroke="#17a9cf" strokeWidth="1.300" /></Svg>}
            </IconButton>
          ))}
          <IconButton aria-label="Rectangle"><Svg s={24}><rect x=".7" y="4.700" width="22.600" height="14.600" stroke="#17a9cf" strokeWidth="1.300" /></Svg></IconButton>
          <SideLine />
          <SideEnd aria-label="Toolbar options"><Svg w={4} h={8}><path d="M4 0V8L0 4Z" fill="#1a1a1a" /></Svg></SideEnd>
        </SideBar>
      </Work>
      <PromptLine>Select dimension to edit.</PromptLine>
    </Client>
    <NxFoot />
  </NxWindow>
);

export default function App() {
  return (
    <Screen>
      <Global />
      <Defs />
      <Desktop>
        <Explorer>
          <ExplorerTop>
            <ExplorerQuick>
              <Svg w={12} h={12}><path d="M0 6H11V12H0Z" fill="#fbdc80" /></Svg>
              <Svg w={14} h={12}><path d="M1 12V6.500H10L13 12" stroke="#888" /></Svg>
              <Svg w={12} h={12}><path d="M0 7H11V12H0Z" fill="#fbdc80" /></Svg>
              <ManageTab>管理</ManageTab>
            </ExplorerQuick>
            <ExplorerControls>
              <ExplorerClose aria-label="Close Explorer"><CrossIcon s={14} c="#999" w={1} /></ExplorerClose>
              <IconButton aria-label="Expand"><Chevron d="down" c="#999" w={1.3} s={14} /></IconButton>
              <IconButton aria-label="Explorer help">
                <Svg s={20}><circle cx="10" cy="10" r="9.500" fill="#0067c8" stroke="#1a4f8a" /><path d="M7 8Q7 5 10 5T13 8Q13 9 10 11V12.500M10 14V16" stroke="#fff" strokeWidth="1.800" /></Svg>
              </IconButton>
            </ExplorerControls>
          </ExplorerTop>
          <ExplorerAddress><AddressBox>401_lite</AddressBox></ExplorerAddress>
          <ExplorerBody>
            <VScroll>
              <VScrollButton aria-label="Scroll up"><Chevron d="up" /></VScrollButton>
              <VThumb />
              <VScrollButton aria-label="Scroll down"><Chevron d="down" /></VScrollButton>
            </VScroll>
          </ExplorerBody>
          <ExplorerStatus>
            <StatusItem $line>36 個項目</StatusItem>
            <StatusItem $pad={1} $gap={8}>已選取 1 個項目</StatusItem>
            <StatusItem $line>25.2 KB</StatusItem>
            <ViewButtons>
              <ViewButton $on aria-label="Details view">
                <Svg w={18} h={16}><path d="M.5 .5H5V15.500H.5ZM0 5.500H5M0 10.500H5" fill="#fff" stroke="#999" /><path d="M7 3H12M13 3H18M7 8H12M13 8H18M7 13H12M13 13H18" stroke="#777" /><path d="M2 2H4V4H2Z" fill="#39c" /><path d="M2 7H4V9H2Z" fill="#693" /><path d="M2 12H4V14H2Z" fill="#c33" /></Svg>
              </ViewButton>
              <ViewButton aria-label="Thumbnail view">
                <Svg w={18} h={14}><rect x=".5" y=".5" width="17" height="13" fill="#fff" stroke="#888" /><path d="M2 2H16V12H2Z" fill="#5b9be8" /><path d="M2 6H16V12H2Z" fill="#b8dcf0" /><path d="M2 6Q8 6 16 11V12H2Z" fill="#3a7a50" /></Svg>
              </ViewButton>
            </ViewButtons>
          </ExplorerStatus>
        </Explorer>
        <Nx />
      </Desktop>
      <Taskbar>
        <Task $w={61} aria-label="Start">
          <Svg s={20}><path d="M0 3 8 2V9.500H0ZM9 1.800 20 0V9.500H9ZM0 10.500H8V18L0 17ZM9 10.500H20V20L9 18.200Z" fill="#000" /></Svg>
        </Task>
        <Task aria-label="Task View">
          <Svg w={20} h={20}><path d="M1 0V3H13V0M1 20V17H13V20M1 6H13V14H1ZM18.500 0V4M18.500 12V20" stroke="#000" strokeWidth="1.300" /><path d="M17 7H20V10H17Z" fill="#000" /></Svg>
        </Task>
        {tasks.map(([t, n, o = {}]) => (
          <Task key={t} aria-label={t} $bg={o.bg}>
            {taskIcons[n]}
            {(o.run || o.multi || o.full) && <Running $multi={o.multi} $full={o.full} $color={o.color} />}
          </Task>
        ))}
        <Tray>
          <IconButton $color="#111" aria-label="Hidden icons"><Svg w={16} h={10}><path d="M0 9 8 1 16 9" {...L} /></Svg></IconButton>
          <IconButton $color="#111" aria-label="Meet now"><Svg w={16} h={18}><path d="M1 5H10V13H1ZM10 8 14 6V12L10 10M2 2Q6-1 10 2M2 16Q6 19 10 16" {...L} /></Svg></IconButton>
          <IconButton $color="#111" aria-label="OneDrive"><Svg w={20} h={18}><path d="M2 12Q0 8 4 7 5 1 10 2 14 2 15 7 18 8 17 12Z" fill="#999" stroke="#555" /><circle cx="14.500" cy="12" r="5.500" fill="#e02030" /><path d="M12.500 10 16.500 14M16.500 10 12.500 14" stroke="#fff" strokeWidth="1.500" /></Svg></IconButton>
          <IconButton $color="#111" aria-label="Battery"><Svg w={20} h={14}><path d="M4 12.500H18V3.500H6M19.500 6V10M1 1V3M4 1V3M0 3.500H5V6L3 7V12" {...L} /><path d="M6 5H16V11H6Z" fill="#000" /></Svg></IconButton>
          <IconButton $color="#111" aria-label="Volume"><Svg w={19} h={14}><path d="M1 5H3L7 1V13L3 9H1ZM11 4 18 11M18 4 11 11" {...L} /></Svg></IconButton>
          <IconButton $color="#111" aria-label="Network"><Svg w={16} h={16}><path d="M1 15Q1 2 15 1M4.500 15Q5 6 15 5M8 15Q8.500 9.500 15 8.500" {...L} /><circle cx="13" cy="14" r="1.800" fill="#000" /></Svg></IconButton>
          <Ime>中</Ime>
          <Clock>下午 07:56<br />2022/12/29</Clock>
          <Notify aria-label="Notifications">
            <Svg w={32} h={32}>
              <path d="M3 4H23V20H14L11 24V20H3Z" fill="#000" />
              <path d="M6 9H20M6 12H20M6 15H16" stroke="#e6dbcd" strokeWidth="1.300" />
              <circle cx="22" cy="22" r="9.500" fill="#d8d4cc" stroke="#888" />
              <text x="18" y="28" fontSize="15" fill="#111">1</text>
            </Svg>
          </Notify>
          <ShowDesktop aria-label="Show desktop" />
        </Tray>
      </Taskbar>
    </Screen>
  );
}
